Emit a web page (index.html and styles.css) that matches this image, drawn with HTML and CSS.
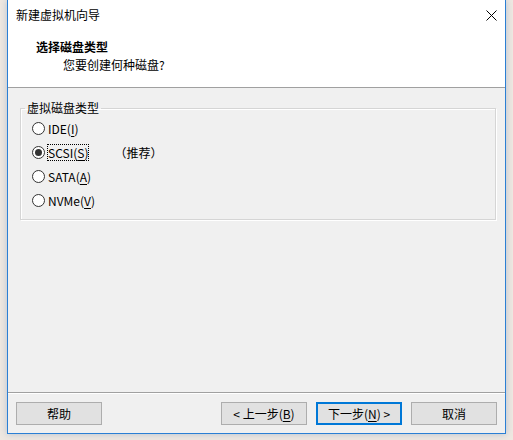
FILE: index.html
```html
<!DOCTYPE html>
<html lang="zh-CN">
<head>
<meta charset="utf-8">
<title>新建虚拟机向导</title>
<link rel="stylesheet" href="styles.css">
</head>
<body>
<div class="desktop">
  <div class="window">
    <div class="titlebar">
      <span class="title">新建虚拟机向导</span>
      <svg class="close" width="11" height="11" viewBox="0 0 11 11"><path d="M0.5 0.5L10.5 10.5M10.5 0.5L0.5 10.5" stroke="#000" stroke-width="1" fill="none"/></svg>
    </div>
    <div class="header">
      <div class="h-title">选择磁盘类型</div>
      <div class="h-sub">您要创建何种磁盘?</div>
    </div>
    <div class="content">
      <fieldset class="group">
        <legend>虚拟磁盘类型</legend>
        <div class="radio"><span class="dot"></span><span class="label">IDE(<u>I</u>)</span></div>
        <div class="radio checked"><span class="dot"></span><span class="label focus">SCSI(<u>S</u>)</span><span class="note">（推荐）</span></div>
        <div class="radio"><span class="dot"></span><span class="label">SATA(<u>A</u>)</span></div>
        <div class="radio"><span class="dot"></span><span class="label">NVMe(<u>V</u>)</span></div>
      </fieldset>
      <div class="footer">
        <button class="btn">帮助</button>
        <button class="btn push">&lt; 上一步(<u>B</u>)</button>
        <button class="btn default">下一步(<u>N</u>) &gt;</button>
        <button class="btn">取消</button>
      </div>
    </div>
  </div>
</div>
</body>
</html>
```
FILE: styles.css
```css
* { box-sizing: border-box; }
html, body { margin: 0; padding: 0; }
body {
  width: 513px;
  height: 440px;
  overflow: hidden;
  background: #efe8e1;
  font-family: "Noto Sans CJK SC", "Noto Sans", sans-serif;
  font-size: 12px;
  color: #000;
}
.desktop {
  width: 513px;
  height: 440px;
  padding-left: 7px;
}
.window {
  width: 499px;
  height: 434px;
  border: 1px solid #2b7fd4;
  border-top: none;
  background: #f0f0f0;
  display: flex;
  flex-direction: column;
  box-shadow: 0 0 7px rgba(40, 100, 170, 0.3);
}
.titlebar {
  height: 30px;
  background: #fff;
  display: flex;
  align-items: center;
  justify-content: space-between;
  padding: 0 8px 0 8px;
  line-height: 16px;
}
.close { display: block; }
.header {
  height: 58px;
  background: #fff;
  border-bottom: 1px solid #a0a0a0;
  padding: 9px 0 0 28px;
  line-height: 16px;
}
.h-title { font-weight: bold; }
.h-sub { margin-top: 2px; padding-left: 27px; }
.content {
  flex: 1;
  display: flex;
  flex-direction: column;
}
.group {
  margin: 12px 0 0 12px;
  width: 476px;
  padding: 0 0 7px 0;
  border: 1px solid #d5d5d5;
  box-shadow: inset 1px 1px 0 #fff, 1px 1px 0 #fff;
  min-width: 0;
}
.group legend {
  margin-left: 4px;
  padding: 0 2px;
  line-height: 16px;
}
.radio {
  height: 24px;
  display: flex;
  align-items: center;
  padding-left: 11px;
}
.dot {
  width: 13px;
  height: 13px;
  border: 1px solid #333;
  border-radius: 50%;
  background: #fff;
  display: flex;
  align-items: center;
  justify-content: center;
  flex: none;
}
.checked .dot::after {
  content: "";
  width: 7px;
  height: 7px;
  border-radius: 50%;
  background: #333;
}
.label {
  margin-left: 2px;
  border: 1px solid transparent;
  line-height: 15px;
}
.label.focus { border: 1px dotted #000; }
.note { margin-left: 25px; line-height: 15px; }
u { text-decoration: underline; text-underline-offset: 2px; }
.footer {
  margin-top: auto;
  height: 41px;
  border-top: 1px solid #a0a0a0;
  box-shadow: inset 0 1px 0 #fff;
  display: flex;
  align-items: flex-start;
  gap: 9px;
  padding: 9px 8px 0 8px;
}
.btn {
  width: 86px;
  height: 23px;
  padding: 0;
  margin: 0;
  background: #e1e1e1;
  border: 1px solid #adadad;
  font-family: inherit;
  font-size: 12px;
  line-height: 19px;
  color: #000;
  text-align: center;
}
.btn.push { margin-left: auto; }
.btn.default {
  border-color: #0078d7;
  box-shadow: inset 0 0 0 1px #0078d7;
}
```
